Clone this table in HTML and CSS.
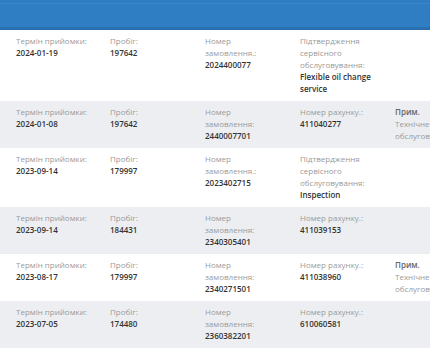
FILE: index.html
```html
<!DOCTYPE html>
<html lang="uk">
<head>
<meta charset="utf-8">
<link rel="stylesheet" href="styles.css">
</head>
<body>
<div class="page">
  <div class="header"><div class="header-line"></div></div>
  <div class="list">
    <div class="row">
      <div class="cell"><span class="lbl">Термін прийомки:</span><span class="val">2024-01-19</span></div>
      <div class="cell"><span class="lbl">Пробіг:</span><span class="val">197642</span></div>
      <div class="cell"><span class="lbl">Номер замовлення.:</span><span class="val">2024400077</span></div>
      <div class="cell"><span class="lbl">Підтвердження сервісного обслуговування:</span><span class="val">Flexible oil change service</span></div>
      <div class="cell"></div>
    </div>
    <div class="row alt">
      <div class="cell"><span class="lbl">Термін прийомки:</span><span class="val">2024-01-08</span></div>
      <div class="cell"><span class="lbl">Пробіг:</span><span class="val">197642</span></div>
      <div class="cell"><span class="lbl">Номер замовлення:</span><span class="val">2440007701</span></div>
      <div class="cell"><span class="lbl">Номер рахунку.:</span><span class="val">411040277</span></div>
      <div class="cell"><span class="note">Прим.</span><span class="lbl">Технічне обслуговування</span></div>
    </div>
    <div class="row">
      <div class="cell"><span class="lbl">Термін прийомки:</span><span class="val">2023-09-14</span></div>
      <div class="cell"><span class="lbl">Пробіг:</span><span class="val">179997</span></div>
      <div class="cell"><span class="lbl">Номер замовлення.:</span><span class="val">2023402715</span></div>
      <div class="cell"><span class="lbl">Підтвердження сервісного обслуговування:</span><span class="val">Inspection</span></div>
      <div class="cell"></div>
    </div>
    <div class="row alt">
      <div class="cell"><span class="lbl">Термін прийомки:</span><span class="val">2023-09-14</span></div>
      <div class="cell"><span class="lbl">Пробіг:</span><span class="val">184431</span></div>
      <div class="cell"><span class="lbl">Номер замовлення:</span><span class="val">2340305401</span></div>
      <div class="cell"><span class="lbl">Номер рахунку.:</span><span class="val">411039153</span></div>
      <div class="cell"></div>
    </div>
    <div class="row">
      <div class="cell"><span class="lbl">Термін прийомки:</span><span class="val">2023-08-17</span></div>
      <div class="cell"><span class="lbl">Пробіг:</span><span class="val">179997</span></div>
      <div class="cell"><span class="lbl">Номер замовлення:</span><span class="val">2340271501</span></div>
      <div class="cell"><span class="lbl">Номер рахунку.:</span><span class="val">411038960</span></div>
      <div class="cell"><span class="note">Прим.</span><span class="lbl">Технічне обслуговування</span></div>
    </div>
    <div class="row alt">
      <div class="cell"><span class="lbl">Термін прийомки:</span><span class="val">2023-07-05</span></div>
      <div class="cell"><span class="lbl">Пробіг:</span><span class="val">174480</span></div>
      <div class="cell"><span class="lbl">Номер замовлення:</span><span class="val">2360382201</span></div>
      <div class="cell"><span class="lbl">Номер рахунку.:</span><span class="val">610060581</span></div>
      <div class="cell"></div>
    </div>
  </div>
</div>
</body>
</html>
```

FILE: styles.css
```css
html, body {
  margin: 0;
  padding: 0;
  background: #ffffff;
}
body {
  font-family: "Open Sans", "Noto Sans", sans-serif;
  font-size: 8px;
  line-height: 12px;
  color: #333333;
}
.page {
  width: 430px;
  height: 350px;
  overflow: hidden;
}
.header {
  height: 27px;
  background: #2f7dc2;
  border-bottom: 3px solid #2a6fb0;
  position: relative;
}
.header-line {
  position: absolute;
  left: 0;
  right: 0;
  top: 3px;
  height: 1px;
  background: #3a86c8;
}
.list {
  width: 560px;
}
.row {
  display: grid;
  grid-template-columns: 94px 95px 95px 95px 95px;
  padding: 5px 0 6px 16px;
  background: #ffffff;
}
.row.alt {
  background: #eceef2;
}
.cell {
  display: flex;
  flex-direction: column;
  padding-right: 22px;
}
.lbl {
  color: #9a9a9a;
}
.val {
  color: #333333;
  font-weight: 600;
}
.note {
  color: #666666;
  font-weight: 600;
}
```
